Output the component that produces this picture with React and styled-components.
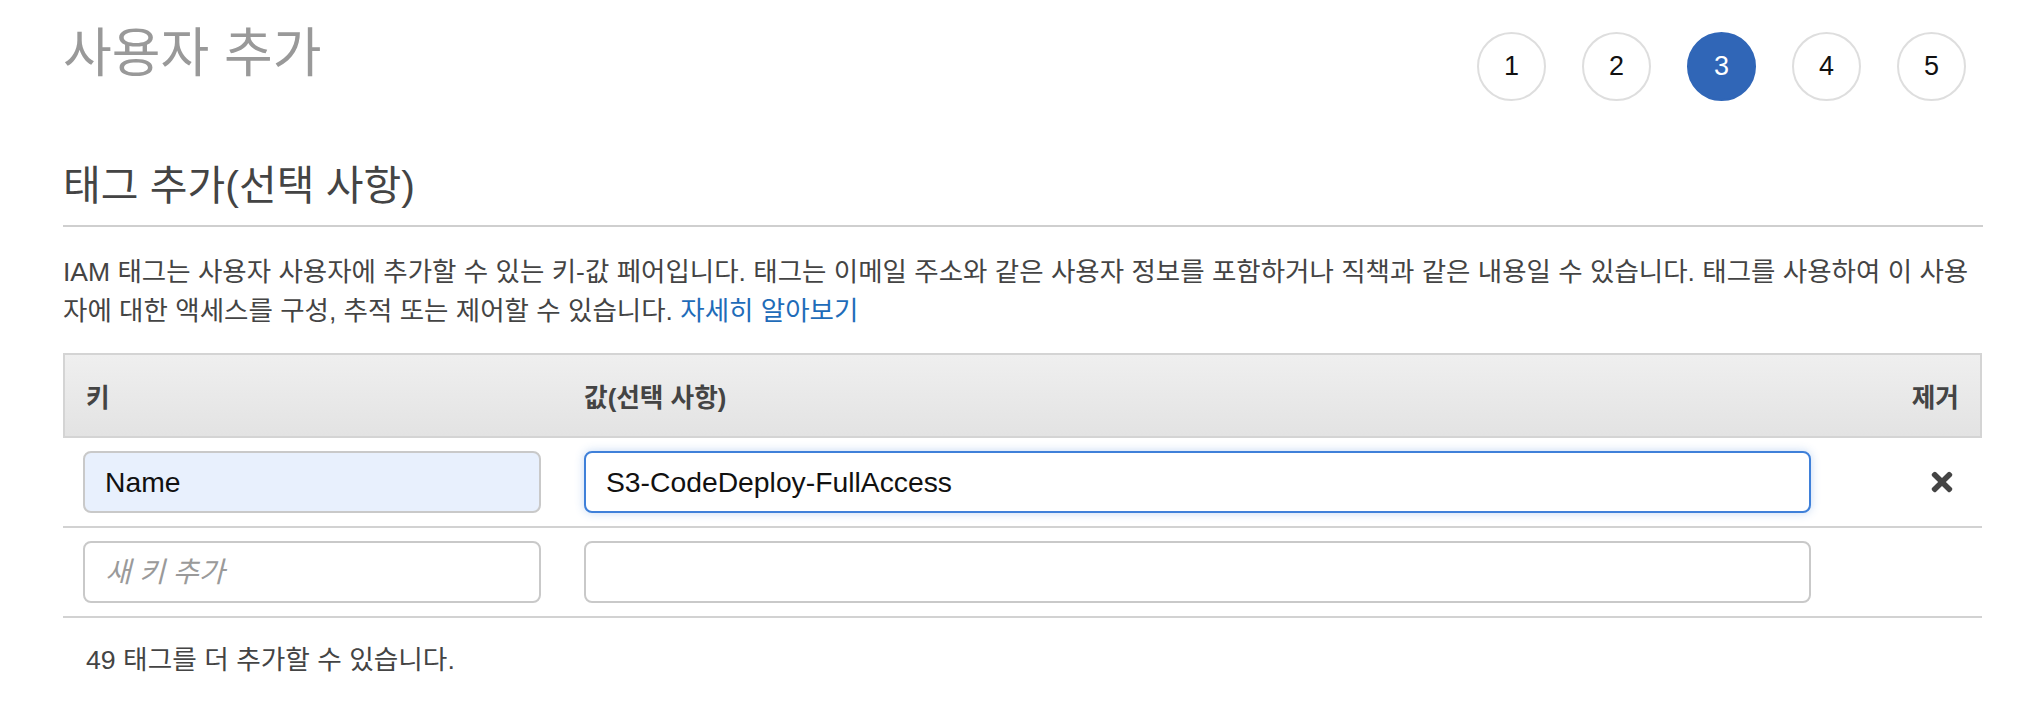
import React from "react";
import styled, { createGlobalStyle, css } from "styled-components";
import { FaTimes } from "react-icons/fa";

const GlobalStyle = createGlobalStyle`
  html, body {
    margin: 0;
    padding: 0;
    background: #ffffff;
  }
  body {
    font-family: "Liberation Sans", "Noto Sans CJK KR", sans-serif;
    color: #444444;
  }
  * { box-sizing: border-box; }
`;

const Page = styled.div`
  width: 2042px;
  padding: 0 59px 40px 63px;
`;

const TopBar = styled.div`
  display: flex;
  justify-content: space-between;
  align-items: flex-start;
  padding-top: 23px;
`;

const PageTitle = styled.h1`
  margin: 0;
  font-size: 53px;
  line-height: 62px;
  font-weight: 400;
  color: #999999;
`;

const Steps = styled.ol`
  display: flex;
  gap: 36px;
  list-style: none;
  margin: 9px 17px 0 0;
  padding: 0;
`;

const Step = styled.li`
  width: 69px;
  height: 69px;
  border-radius: 50%;
  display: flex;
  align-items: center;
  justify-content: center;
  font-size: 27px;
  font-family: "Liberation Sans", sans-serif;
  color: ${(p) => (p.$active ? "#ffffff" : "#111111")};
  background: ${(p) => (p.$active ? "#3066b7" : "#ffffff")};
  border: 2px solid ${(p) => (p.$active ? "#3066b7" : "#dedede")};
`;

const SectionTitle = styled.h2`
  margin: 61px 0 0 0;
  padding-bottom: 15px;
  border-bottom: 2px solid #cfcfcf;
  font-size: 41px;
  line-height: 48px;
  font-weight: 400;
  color: #444444;
`;

const Description = styled.p`
  margin: 26px 0 0 0;
  font-size: 26.5px;
  line-height: 39px;
  white-space: nowrap;
  color: #444444;
`;

const Link = styled.a`
  color: #1f6cb9;
  text-decoration: none;
`;

const Table = styled.div`
  margin-top: 22px;
  width: 1919px;
`;

const HeaderRow = styled.div`
  display: grid;
  grid-template-columns: 519px 1227px 1fr;
  align-items: center;
  height: 85px;
  background: linear-gradient(#efefef, #e3e3e3);
  border: 2px solid #d4d4d4;
`;

const HeaderCell = styled.div`
  font-size: 25.7px;
  font-weight: 700;
  color: #444444;
  padding: ${(p) => p.$pad || "0"};
  text-align: ${(p) => (p.$right ? "right" : "left")};
`;

const Row = styled.div`
  display: grid;
  grid-template-columns: 521px 1227px 1fr;
  align-items: center;
  height: 90px;
  border-bottom: 2px solid #d2d2d2;
`;

const Cell = styled.div`
  display: flex;
  justify-content: ${(p) => (p.$right ? "flex-end" : "flex-start")};
  padding: ${(p) => p.$pad || "0"};
`;

const fieldBase = css`
  height: 62px;
  border-radius: 8px;
  border: 2px solid #c9c9c9;
  padding: 0 20px;
  font-family: "Liberation Sans", "Noto Sans CJK KR", sans-serif;
  font-size: 28.3px;
  color: #111111;
  outline: none;
  &::placeholder {
    color: #9a9a9a;
    font-style: italic;
  }
`;

const Field = styled.input`
  ${fieldBase};
  width: ${(p) => p.$width || "100%"};
  background: ${(p) => (p.$filled ? "#e8f0fd" : "#ffffff")};
  ${(p) =>
    p.$focused &&
    css`
      border-color: #3f80d9;
      box-shadow: 0 0 10px rgba(63, 128, 217, 0.3);
    `}
`;

const RemoveButton = styled.button`
  border: none;
  background: none;
  padding: 0;
  color: #444444;
  display: flex;
  align-items: center;
  cursor: pointer;
`;

const Footer = styled.p`
  margin: 23px 0 0 23px;
  font-size: 26.7px;
  line-height: 39px;
  color: #444444;
`;

export default function App() {
  return (
    <>
      <GlobalStyle />
      <Page>
        <TopBar>
          <PageTitle>사용자 추가</PageTitle>
          <Steps>
            {[1, 2, 3, 4, 5].map((n) => (
              <Step key={n} $active={n === 3}>
                {n}
              </Step>
            ))}
          </Steps>
        </TopBar>

        <SectionTitle>태그 추가(선택 사항)</SectionTitle>
        <Description>
          IAM 태그는 사용자 사용자에 추가할 수 있는 키-값 페어입니다. 태그는 이메일 주소와 같은 사용자 정보를 포함하거나 직책과 같은 내용일 수 있습니다. 태그를 사용하여 이 사용
          <br />
          자에 대한 액세스를 구성, 추적 또는 제어할 수 있습니다. <Link href="#">자세히 알아보기</Link>
        </Description>

        <Table>
          <HeaderRow>
            <HeaderCell $pad="0 0 0 21px">키</HeaderCell>
            <HeaderCell>값(선택 사항)</HeaderCell>
            <HeaderCell $right $pad="0 21px 0 0">제거</HeaderCell>
          </HeaderRow>
          <Row>
            <Cell $pad="0 0 0 20px">
              <Field $width="458px" $filled defaultValue="Name" />
            </Cell>
            <Cell>
              <Field $focused defaultValue="S3-CodeDeploy-FullAccess" />
            </Cell>
            <Cell $right $pad="0 25px 0 0">
              <RemoveButton aria-label="제거">
                <FaTimes size={30} />
              </RemoveButton>
            </Cell>
          </Row>
          <Row>
            <Cell $pad="0 0 0 20px">
              <Field $width="458px" placeholder="새 키 추가" />
            </Cell>
            <Cell>
              <Field />
            </Cell>
            <Cell />
          </Row>
        </Table>

        <Footer>49 태그를 더 추가할 수 있습니다.</Footer>
      </Page>
    </>
  );
}
